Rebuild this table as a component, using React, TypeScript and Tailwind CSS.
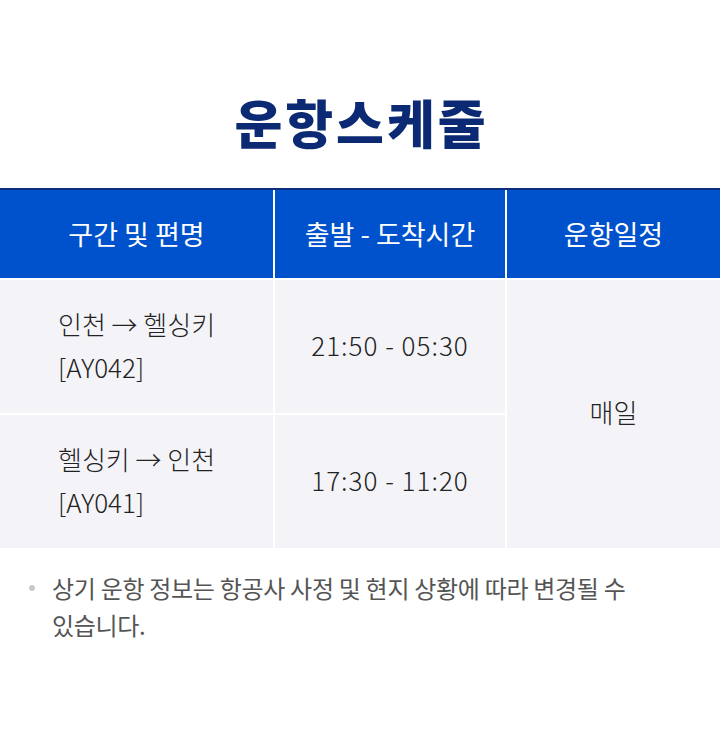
const rows = [
  { route: "인천 → 헬싱키", flight: "[AY042]", time: "21:50 - 05:30" },
  { route: "헬싱키 → 인천", flight: "[AY041]", time: "17:30 - 11:20" },
];

export default function App() {
  return (
    <div
      className="w-[720px] h-[738px] bg-white"
      style={{ fontFamily: '"Noto Sans CJK KR", "Noto Sans", sans-serif' }}
    >
      <div className="pt-[86px] pb-[30px] flex justify-center">
        <h1 className="text-[52px] leading-[72px] font-black text-[#0b2a73] tracking-[3px] pl-[3px]">
          운항스케줄
        </h1>
      </div>

      {/* schedule table */}
      <div className="border-t-2 border-[#0b2f7e]">
        <div className="grid grid-cols-[273px_230px_1fr] gap-x-[2px] bg-white">
          <div className="h-[88px] bg-[#0052cc] flex items-center justify-center text-white text-[27px]">
            구간 및 편명
          </div>
          <div className="h-[88px] bg-[#0052cc] flex items-center justify-center text-white text-[27px]">
            출발 - 도착시간
          </div>
          <div className="h-[88px] bg-[#0052cc] flex items-center justify-center text-white text-[27px]">
            운항일정
          </div>
        </div>

        <div className="grid grid-cols-[273px_230px_1fr] gap-[2px] bg-white pt-[2px]">
          {rows.map((r, i) => (
            <div key={r.flight} className="contents">
              <div className="h-[133px] bg-[#f4f4f8] flex flex-col justify-center pl-[58px] pb-[4px] text-[26px] leading-[43px] text-[#222] font-light">
                <span>{r.route}</span>
                <span>{r.flight}</span>
              </div>
              <div className="h-[133px] bg-[#f4f4f8] flex items-center justify-center pb-[4px] text-[26px] tracking-[1px] text-[#222] font-light">
                {r.time}
              </div>
              {i === 0 && (
                <div className="row-span-2 bg-[#f4f4f8] flex items-center justify-center pb-[6px] text-[26px] text-[#222] font-light">
                  매일
                </div>
              )}
            </div>
          ))}
        </div>
      </div>

      <div className="flex pl-[29px] pt-[21px]">
        <span className="w-[6px] h-[6px] rounded-full bg-[#c8c8c8] mt-[16px] shrink-0" />
        <p className="ml-[17px] w-[600px] break-keep text-[24px] leading-[37px] text-[#555] tracking-[-0.3px]">
          상기 운항 정보는 항공사 사정 및 현지 상황에 따라 변경될 수 있습니다.
        </p>
      </div>
    </div>
  );
}
